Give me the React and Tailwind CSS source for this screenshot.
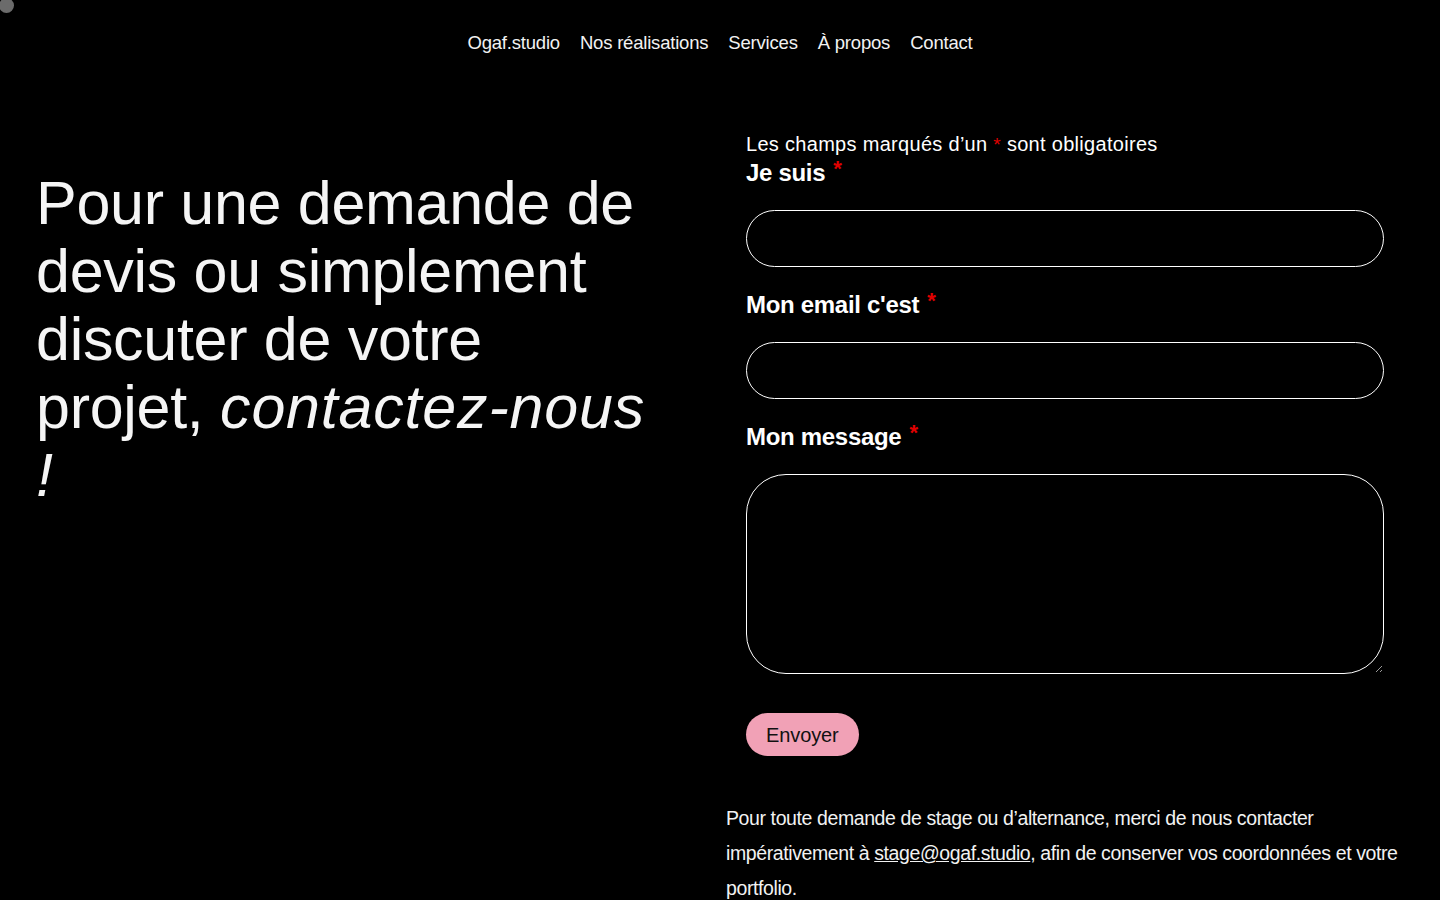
import React from 'react';

const FONT = { fontFamily: '"Liberation Sans", Arial, sans-serif' };

const NAV = ['Ogaf.studio', 'Nos réalisations', 'Services', 'À propos', 'Contact'];

const Req = () => (
  <span className="ml-[8px] align-top text-[22px] leading-none text-[#e10000]">*</span>
);

function Field({ label, textarea }) {
  return (
    <div className="flex flex-col">
      <label className="text-[24px] font-bold leading-[30px] tracking-[-0.3px] text-white">
        {label}
        <Req />
      </label>
      {textarea ? (
        <textarea className="mt-[22px] h-[200px] w-full resize-y rounded-[40px] border border-white bg-black px-6 py-4 text-white outline-none" />
      ) : (
        <input type="text" className="mt-[22px] h-[57px] w-full rounded-full border border-white bg-black px-6 text-white outline-none" />
      )}
    </div>
  );
}

export default function App() {
  return (
    <div className="relative min-h-[900px] w-full overflow-hidden bg-black text-white" style={FONT}>
      {/* cursor blob */}
      <div className="absolute -left-[1px] -top-[2px] h-[15px] w-[15px] rounded-full bg-[#6b6b6b]" />

      <nav className="flex justify-center gap-[20px] pt-[31px] text-[18.5px] leading-[24px] tracking-[-0.2px] text-[#f2f2f2]">
        {NAV.map((n) => (
          <a key={n} href="#" className="whitespace-nowrap">{n}</a>
        ))}
      </nav>

      <main className="flex pt-[76px]">
        <section className="w-[726px] shrink-0 pl-[36px] pt-[38px]">
          <h1 className="w-[622px] text-[61px] font-normal leading-[68px] tracking-[-0.3px] text-[#f5f5f5]">
            Pour une demande de devis ou simplement discuter de votre projet, <em className="italic tracking-[0.8px]">contactez-nous !</em>
          </h1>
        </section>

        <section className="w-[678px] shrink-0">
          <div className="px-[20px]">
            <p className="text-[20px] leading-[26px] tracking-[0.3px] text-white">
              Les champs marqués d’un <span className="text-[19px] text-[#e10000]">*</span> sont obligatoires
            </p>
            <div className="flex flex-col gap-[23px]">
              <Field label="Je suis" />
              <Field label="Mon email c'est" />
              <Field label="Mon message" textarea />
            </div>
            <button className="mt-[39px] h-[43px] rounded-full bg-[#f1a1b6] px-[20px] text-[20px] tracking-[-0.1px] text-[#111]">
              Envoyer
            </button>
          </div>
          <p className="mt-[45px] text-[19.5px] leading-[35px] tracking-[-0.4px] text-[#f2f2f2]">
            Pour toute demande de stage ou d’alternance, merci de nous contacter impérativement à{' '}
            <a href="#" className="underline">stage@ogaf.studio</a>, afin de conserver vos coordonnées et votre portfolio.
          </p>
        </section>
      </main>
    </div>
  );
}
